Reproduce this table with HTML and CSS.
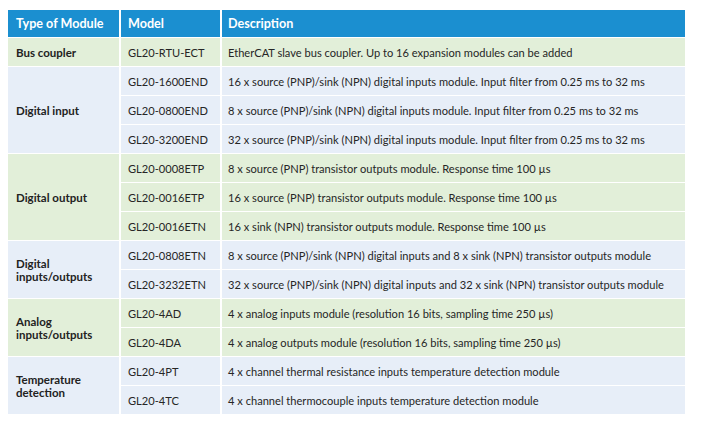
FILE: index.html
```html
<!DOCTYPE html>
<html>
<head>
<meta charset="utf-8">
<link rel="stylesheet" href="styles.css">
</head>
<body>
<table class="modules">
  <thead>
    <tr><th class="c1">Type of Module</th><th class="c2">Model</th><th class="c3">Description</th></tr>
  </thead>
  <tbody class="green">
    <tr><td class="type">Bus coupler</td><td>GL20-RTU-ECT</td><td class="desc">EtherCAT slave bus coupler. Up to 16 expansion modules can be added</td></tr>
  </tbody>
  <tbody class="blue">
    <tr><td class="type" rowspan="3">Digital input</td><td>GL20-1600END</td><td class="desc">16 x source (PNP)/sink (NPN) digital inputs module. Input filter from 0.25 ms to 32 ms</td></tr>
    <tr><td>GL20-0800END</td><td class="desc">8 x source (PNP)/sink (NPN) digital inputs module. Input filter from 0.25 ms to 32 ms</td></tr>
    <tr><td>GL20-3200END</td><td class="desc">32 x source (PNP)/sink (NPN) digital inputs module. Input filter from 0.25 ms to 32 ms</td></tr>
  </tbody>
  <tbody class="green">
    <tr><td class="type" rowspan="3">Digital output</td><td>GL20-0008ETP</td><td class="desc">8 x source (PNP) transistor outputs module. Response time 100 µs</td></tr>
    <tr><td>GL20-0016ETP</td><td class="desc">16 x source (PNP) transistor outputs module. Response time 100 µs</td></tr>
    <tr><td>GL20-0016ETN</td><td class="desc">16 x sink (NPN) transistor outputs module. Response time 100 µs</td></tr>
  </tbody>
  <tbody class="blue">
    <tr><td class="type" rowspan="2">Digital<br>inputs/outputs</td><td>GL20-0808ETN</td><td class="desc">8 x source (PNP)/sink (NPN) digital inputs and 8 x sink (NPN) transistor outputs module</td></tr>
    <tr><td>GL20-3232ETN</td><td class="desc">32 x source (PNP)/sink (NPN) digital inputs and 32 x sink (NPN) transistor outputs module</td></tr>
  </tbody>
  <tbody class="green">
    <tr><td class="type" rowspan="2">Analog<br>inputs/outputs</td><td>GL20-4AD</td><td class="desc">4 x analog inputs module (resolution 16 bits, sampling time 250 µs)</td></tr>
    <tr><td>GL20-4DA</td><td class="desc">4 x analog outputs module (resolution 16 bits, sampling time 250 µs)</td></tr>
  </tbody>
  <tbody class="blue">
    <tr><td class="type" rowspan="2">Temperature<br>detection</td><td>GL20-4PT</td><td class="desc">4 x channel thermal resistance inputs temperature detection module</td></tr>
    <tr><td>GL20-4TC</td><td class="desc">4 x channel thermocouple inputs temperature detection module</td></tr>
  </tbody>
</table>
</body>
</html>
```
FILE: styles.css
```css
html, body {
  margin: 0;
  padding: 0;
  background: #ffffff;
}
body {
  padding: 10px 0 0 8px;
  font-family: "Lato", "Liberation Sans", sans-serif;
  font-size: 11.1px;
  color: #262626;
}
.modules {
  border-collapse: collapse;
  width: 677px;
  table-layout: fixed;
}
.modules th, .modules td {
  border-left: 2px solid #ffffff;
  border-top: 1px solid #ffffff;
  padding: 0 0 0 7px;
  text-align: left;
  vertical-align: middle;
  white-space: nowrap;
}
.modules th:first-child, .modules td.type {
  border-left: none;
}
.modules th {
  background: #1b8fd0;
  color: #ffffff;
  font-weight: 700;
  font-size: 12.6px;
  height: 27px;
  border-top: none;
}
.modules .c1 { width: 103px; padding-left: 8px; }
.modules .c2 { width: 92px; }
.modules .c3 { padding-left: 6px; }
.modules td {
  height: 28px;
}
.modules td.desc { padding-left: 6px; }
.modules td.type {
  font-weight: 700;
  font-size: 11.5px;
  line-height: 13px;
  color: #222222;
  padding-left: 8px;
}
.green td { background: #e2efd9; }
.blue td { background: #e7eef8; }
```
